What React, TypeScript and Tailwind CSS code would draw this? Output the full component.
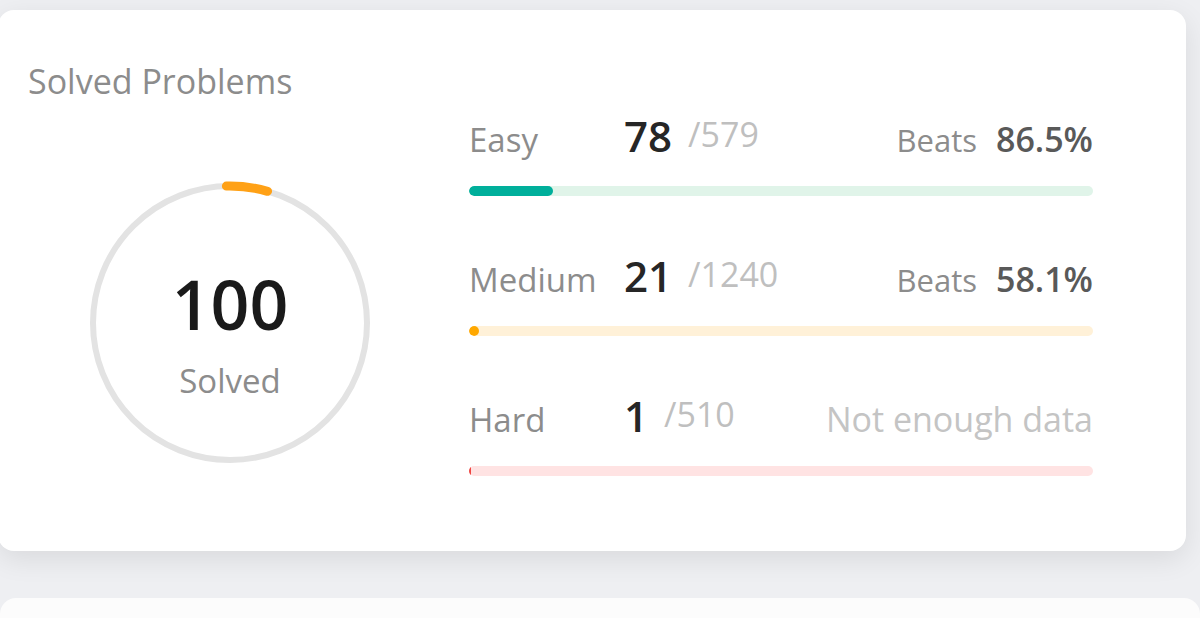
import React from "react";

type Row = {
  label: string;
  solved: number;
  total: number;
  beats: string | null;
  fill: string;
  track: string;
  width: string;
};

const rows: Row[] = [
  {
    label: "Easy",
    solved: 78,
    total: 579,
    beats: "86.5%",
    fill: "bg-[#00af9b]",
    track: "bg-[#e0f4e9]",
    width: "w-[84px]",
  },
  {
    label: "Medium",
    solved: 21,
    total: 1240,
    beats: "58.1%",
    fill: "bg-[#ffa800]",
    track: "bg-[#fff1d8]",
    width: "w-[10px]",
  },
  {
    label: "Hard",
    solved: 1,
    total: 510,
    beats: null,
    fill: "bg-[#ef4743]",
    track: "bg-[#ffe3e3]",
    width: "w-[2px]",
  },
];

const Ring = () => (
  <div className="relative w-[290px] h-[290px]">
    <svg width="290" height="290" viewBox="0 0 290 290">
      <circle cx="145" cy="145" r="137" fill="none" stroke="#e3e3e3" strokeWidth="6" />
      <path
        d="M141.4 8.05 A137 137 0 0 1 182.5 13.3"
        fill="none"
        stroke="#ffa116"
        strokeWidth="9"
        strokeLinecap="round"
      />
    </svg>
    <div className="absolute inset-0 flex flex-col items-center justify-center">
      <span className="text-[68px] leading-[70px] font-semibold text-[#1a1a1a] mt-[24px]">100</span>
      <span className="text-[33px] leading-[40px] text-[#8c8c8c] mt-[22px]">Solved</span>
    </div>
  </div>
);

const DifficultyRow = ({ row }: { row: Row }) => (
  <div>
    <div className="flex items-baseline">
      <span className="w-[155px] text-[33px] leading-[40px] text-[#8c8c8c]">{row.label}</span>
      <span className="text-[42px] leading-[40px] font-semibold text-[#262626]">{row.solved}</span>
      <span className="ml-[16px] text-[34px] leading-[40px] text-[#bfbfbf] -translate-y-[5px]">
        /{row.total}
      </span>
      {row.beats ? (
        <span className="ml-auto flex items-baseline">
          <span className="text-[31px] leading-[40px] text-[#8c8c8c]">Beats</span>
          <span className="ml-[19px] text-[34px] leading-[40px] font-semibold text-[#595959]">
            {row.beats}
          </span>
        </span>
      ) : (
        <span className="ml-auto text-[34px] leading-[40px] text-[#c4c4c4]">Not enough data</span>
      )}
    </div>
    <div className={`mt-[26px] h-[10px] rounded-full ${row.track} overflow-hidden`}>
      <div className={`h-full rounded-full ${row.fill} ${row.width}`} />
    </div>
  </div>
);

export default function App() {
  return (
    <div
      className="h-[618px] overflow-hidden bg-[#eeeff2] pt-[10px]"
      style={{ fontFamily: '"Open Sans", "Noto Sans", sans-serif' }}
    >
      <div className="ml-[-2px] w-[1188px] h-[541px] rounded-[16px] bg-white shadow-[0_8px_28px_rgba(0,0,0,0.09)] pl-[30px] pr-[93px] pt-[51px]">
        <h2 className="text-[34px] leading-[40px] text-[#8c8c8c]">Solved Problems</h2>
        <div className="flex mt-[15px]">
          <div className="w-[441px] shrink-0">
            <div className="ml-[57px] mt-[62px]">
              <Ring />
            </div>
          </div>
          <div className="flex-1 flex flex-col gap-[60px]">
            {rows.map((row) => (
              <DifficultyRow key={row.label} row={row} />
            ))}
          </div>
        </div>
      </div>
      <div className="mt-[47px] h-[100px] rounded-t-[16px] bg-[#fcfcfc]" />
    </div>
  );
}
